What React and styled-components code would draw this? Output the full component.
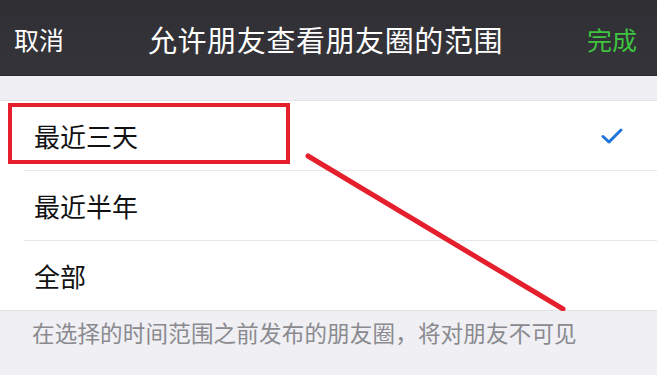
import React from "react";
import styled, { createGlobalStyle } from "styled-components";

const GlobalStyle = createGlobalStyle`
    html, body {
        margin: 0;
        padding: 0;
        background: #efeff4;
    }
    * {
        box-sizing: border-box;
    }
    body {
        font-family: "Noto Sans CJK SC", "Noto Sans", sans-serif;
    }
`;

const Page = styled.div`
    width: 657px;
    height: 375px;
    overflow: hidden;
    background: #efeff4;
    display: flex;
    flex-direction: column;
`;

const NavBar = styled.div`
    height: 76px;
    flex-shrink: 0;
    display: grid;
    grid-template-columns: 1fr auto 1fr;
    align-items: center;
    padding: 0 20px 0 14px;
    background: linear-gradient(#302f34, #35343a);
    border-bottom: 1px solid #2a292e;
`;

const NavButton = styled.span`
    font-size: 25px;
    color: ${props => props.color || "#ffffff"};
    justify-self: ${props => props.align || "start"};
    line-height: 1;
    margin-top: 4px;
`;

const Title = styled.h1`
    margin: 0;
    margin-top: 4px;
    font-size: 29px;
    font-weight: 400;
    color: #ffffff;
    line-height: 1;
    letter-spacing: 0.6px;
`;

const Gap = styled.div`
    height: 25px;
    flex-shrink: 0;
    border-bottom: 1px solid #e2e2e6;
`;

const List = styled.div`
    position: relative;
    background: #ffffff;
    border-bottom: 1px solid #e2e2e6;
`;

const Row = styled.div`
    position: relative;
    margin-left: 24px;
    padding: 0 34px 0 10px;
    display: flex;
    align-items: center;
    justify-content: space-between;
    border-bottom: ${props => (props.last ? "none" : "1px solid #e6e6e9")};
    height: ${props => (props.last ? 69 : 70)}px;
`;

const RowLabel = styled.span`
    font-size: 26px;
    color: #111111;
    line-height: 1;
`;

const Check = styled.svg`
    width: 22px;
    height: 18px;
    display: block;
`;

const MarkBox = styled.div`
    position: absolute;
    left: -16px;
    top: 2px;
    width: 282px;
    height: 61px;
    border: 4px solid #e51f2b;
    pointer-events: none;
`;

const Arrow = styled.svg`
    position: absolute;
    left: 0;
    top: 0;
    width: 657px;
    height: 210px;
    pointer-events: none;
`;

const Note = styled.p`
    margin: 0;
    padding: 6px 32px 0;
    font-size: 22.5px;
    line-height: 1.4;
    color: #8a8a8f;
    letter-spacing: 0.2px;
`;

const options = [
    { label: "最近三天", checked: true },
    { label: "最近半年" },
    { label: "全部" },
];

export default function App() {
    return (
        <>
            <GlobalStyle />
            <Page>
                <NavBar>
                    <NavButton>取消</NavButton>
                    <Title>允许朋友查看朋友圈的范围</Title>
                    <NavButton color="#3ec53f" align="end">完成</NavButton>
                </NavBar>
                <Gap />
                <List>
                    {options.map((item, i) => (
                        <Row key={item.label} last={i === options.length - 1}>
                            <RowLabel>{item.label}</RowLabel>
                            {item.checked && (
                                <Check viewBox="0 0 22 18">
                                    <path
                                        d="M2 9.5 L8 15 L20 3"
                                        fill="none"
                                        stroke="#1f74dc"
                                        strokeWidth="3"
                                        strokeLinecap="round"
                                        strokeLinejoin="round"
                                    />
                                </Check>
                            )}
                            {item.checked && <MarkBox />}
                        </Row>
                    ))}
                    {/* annotation drawn over the list */}
                    <Arrow viewBox="0 0 657 210">
                        <line
                            x1="308"
                            y1="55"
                            x2="563"
                            y2="208"
                            stroke="#e51f2b"
                            strokeWidth="5"
                            strokeLinecap="round"
                        />
                    </Arrow>
                </List>
                <Note>在选择的时间范围之前发布的朋友圈，将对朋友不可见</Note>
            </Page>
        </>
    );
}
